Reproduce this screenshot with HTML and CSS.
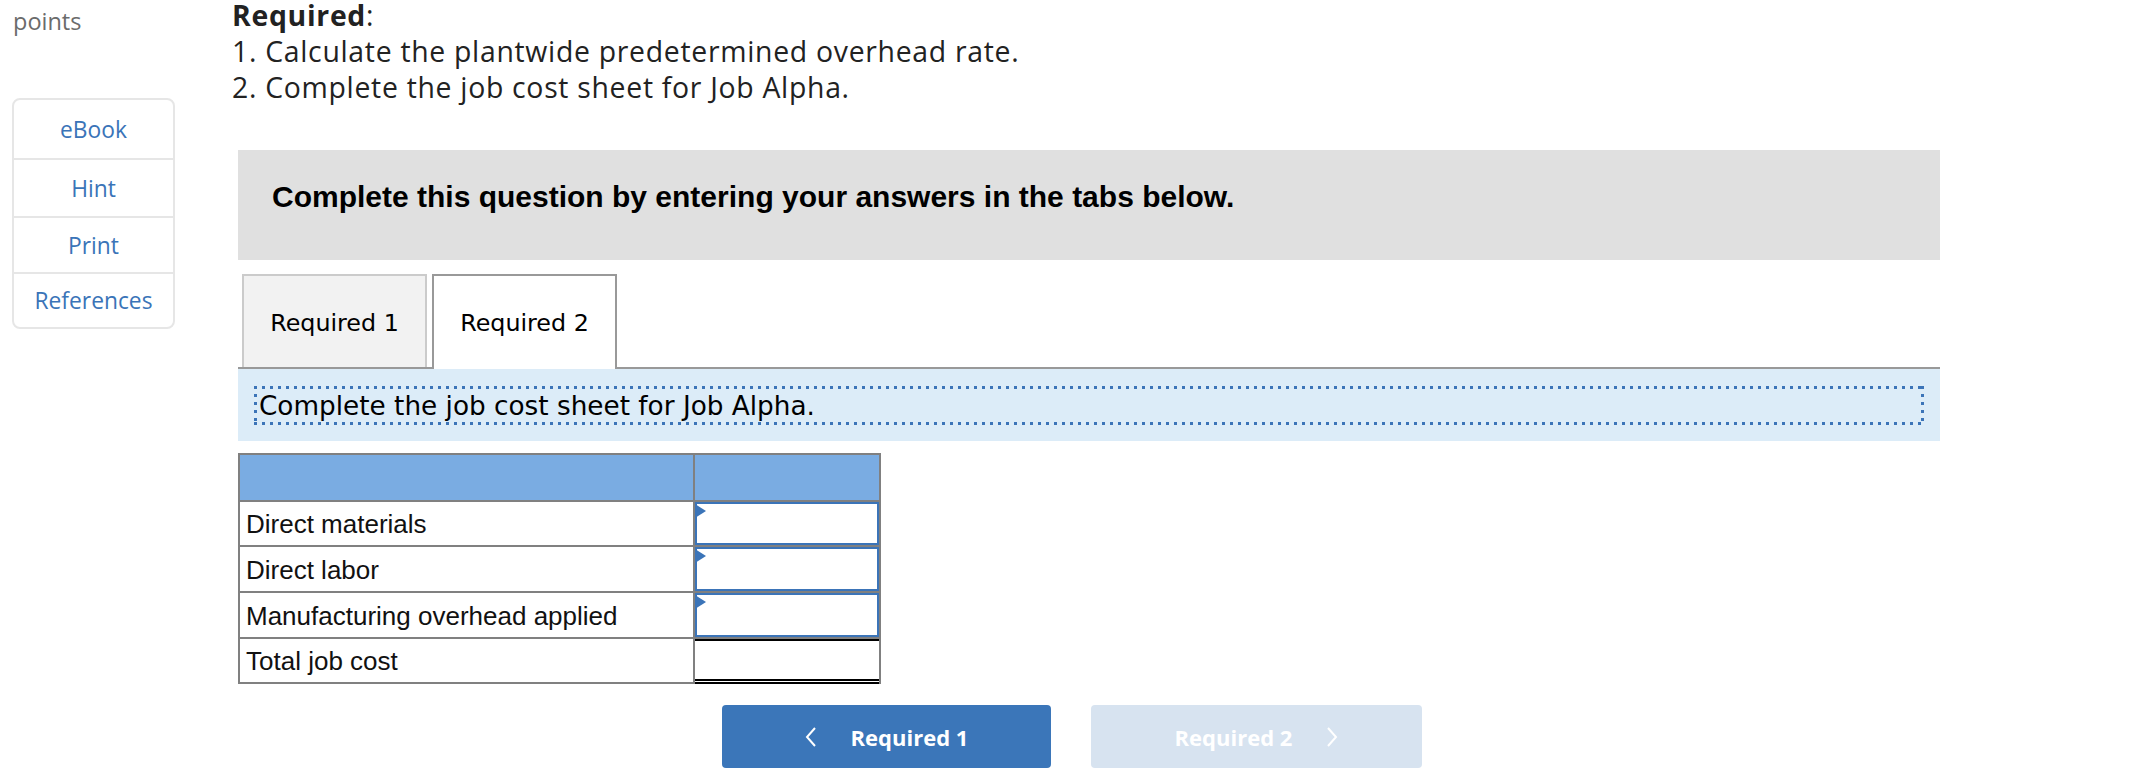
FILE: index.html
```html
<!DOCTYPE html>
<html lang="en">
<head>
<meta charset="utf-8">
<title>Job cost sheet</title>
<link rel="stylesheet" href="styles.css">
</head>
<body>
<div class="page">
  <aside class="side">
    <div class="points">points</div>
    <nav class="tools">
      <a class="tool t1" href="#">eBook</a>
      <a class="tool t2" href="#">Hint</a>
      <a class="tool t3" href="#">Print</a>
      <a class="tool t4" href="#">References</a>
    </nav>
  </aside>
  <main class="main">
    <div class="req">
      <div class="req-title"><strong>Required</strong>:</div>
      <div class="req-line first">1. Calculate the plantwide predetermined overhead rate.</div>
      <div class="req-line">2. Complete the job cost sheet for Job Alpha.</div>
    </div>
    <div class="banner">Complete this question by entering your answers in the tabs below.</div>
    <div class="tabs">
      <div class="tab">Required 1</div>
      <div class="tab active">Required 2</div>
    </div>
    <div class="instr">
      <div class="focus">Complete the job cost sheet for Job Alpha.</div>
    </div>
    <div class="sheet">
      <div class="cell head"></div>
      <div class="cell head"></div>
      <div class="cell label">Direct materials</div>
      <div class="cell val"><div class="inp"></div></div>
      <div class="cell label">Direct labor</div>
      <div class="cell val"><div class="inp"></div></div>
      <div class="cell label">Manufacturing overhead applied</div>
      <div class="cell val"><div class="inp"></div></div>
      <div class="cell label">Total job cost</div>
      <div class="cell val total"></div>
    </div>
    <div class="nav">
      <a class="btn prev" href="#">
        <svg class="chev" width="12" height="20" viewBox="0 0 12 20"><polyline points="10,1 2,10 10,19" fill="none" stroke="#fff" stroke-width="2"/></svg>
        <span>Required 1</span>
      </a>
      <a class="btn next" href="#">
        <span>Required 2</span>
        <svg class="chev" width="12" height="20" viewBox="0 0 12 20"><polyline points="2,1 10,10 2,19" fill="none" stroke="#fff" stroke-width="2"/></svg>
      </a>
    </div>
  </main>
</div>
</body>
</html>
```
FILE: styles.css
```css
* { box-sizing: border-box; }
html, body { margin: 0; padding: 0; background: #fff; }
body { font-family: "Open Sans", Lato, sans-serif; color: #222; }

.page { display: flex; align-items: flex-start; padding-left: 12px; }

.side { width: 163px; flex: none; }
.points {
  margin-top: 6px;
  padding-left: 1px;
  font-size: 23.5px;
  line-height: 30px;
  color: #6b6b6b;
}
.tools {
  margin-top: 62px;
  display: flex;
  flex-direction: column;
  border: 2px solid #e6e6e6;
  border-radius: 8px;
}
.tool {
  display: flex;
  align-items: center;
  justify-content: center;
  font-size: 22.8px;
  color: #3a74b8;
  text-decoration: none;
}
.t1 { height: 58px; }
.t2 { height: 58px; }
.t3 { height: 56px; }
.t4 { height: 55px; }
.tool + .tool { border-top: 2px solid #e6e6e6; }

.main { margin-left: 57px; flex: none; width: 1708px; }

.req {
  font-size: 28.4px;
  letter-spacing: 0.7px;
  color: #222;
}
.req-title { line-height: 30px; }
.req-title strong { font-weight: 700; }
.req-line { line-height: 36px; }
.req-line.first { margin-top: 3px; }

.banner {
  margin: 45px 0 0 6px;
  width: 1702px;
  height: 110px;
  padding: 30px 34px 0;
  background: #e0e0e0;
  font-family: "Liberation Sans", Arial, sans-serif;
  font-weight: 700;
  font-size: 30px;
  line-height: 34px;
  color: #000;
}

.tabs {
  margin: 14px 0 0 6px;
  width: 1702px;
  display: flex;
  gap: 5px;
  padding-left: 4px;
  border-bottom: 2px solid #999;
  align-items: flex-end;
}
.tab {
  width: 185px;
  height: 93px;
  display: flex;
  align-items: center;
  justify-content: center;
  background: #f2f2f2;
  border: 2px solid #cbcbcb;
  border-bottom: none;
  font-family: "DejaVu Sans", Verdana, sans-serif;
  font-size: 23.8px;
  color: #000;
  padding-top: 2px;
}
.tab.active {
  height: 95px;
  margin-bottom: -2px;
  background: #fff;
  border-color: #999;
  padding-top: 0;
}

.instr {
  margin-left: 6px;
  width: 1702px;
  background: #dcecf8;
  padding: 17px 16px 16px;
}
.focus {
  padding: 4px 3px 2px 5px;
  font-family: "DejaVu Sans", Verdana, sans-serif;
  font-size: 26.3px;
  line-height: 33px;
  color: #000;
  background:
    repeating-linear-gradient(90deg, #3b74b8 0 3px, transparent 3px 8px) left top / 100% 3px no-repeat,
    repeating-linear-gradient(90deg, #3b74b8 0 3px, transparent 3px 8px) left bottom / 100% 3px no-repeat,
    repeating-linear-gradient(180deg, #3b74b8 0 3px, transparent 3px 8px) left top / 3px 100% no-repeat,
    repeating-linear-gradient(180deg, #3b74b8 0 3px, transparent 3px 8px) right top / 3px 100% no-repeat;
}

.sheet {
  margin: 12px 0 0 6px;
  display: grid;
  width: max-content;
  grid-template-columns: 453px 184px;
  grid-template-rows: 45px 43px 44px 44px 43px;
  gap: 2px;
  border: 2px solid #808080;
  background: #808080;
  font-family: "Liberation Sans", Arial, sans-serif;
  font-size: 26px;
  color: #111;
}
.cell { background: #fff; }
.cell.head { background: #7aace2; }
.cell.label { display: flex; align-items: center; padding-left: 6px; padding-top: 2px; }
.inp {
  position: relative;
  height: 100%;
  border: 2px solid #3b74b8;
}
.inp::before {
  content: "";
  position: absolute;
  left: -2px;
  top: 0;
  border-left: 11px solid #3b74b8;
  border-top: 7px solid transparent;
  border-bottom: 7px solid transparent;
}
.cell.total {
  border-top: 2px solid #000;
  border-bottom: 5px double #000;
  margin-bottom: -2px;
}

.nav {
  margin: 21px 0 0 490px;
  display: flex;
  gap: 40px;
}
.btn {
  width: 329px;
  height: 63px;
  border-radius: 4px;
  display: flex;
  align-items: center;
  justify-content: center;
  gap: 34px;
  color: #fff;
  text-decoration: none;
  font-family: "Open Sans", Lato, sans-serif;
  font-weight: 700;
  font-size: 22px;
}
.btn.prev { background: #3b76b9; }
.btn.next { width: 331px; background: #d7e3f0; }
.chev { display: block; }
```
